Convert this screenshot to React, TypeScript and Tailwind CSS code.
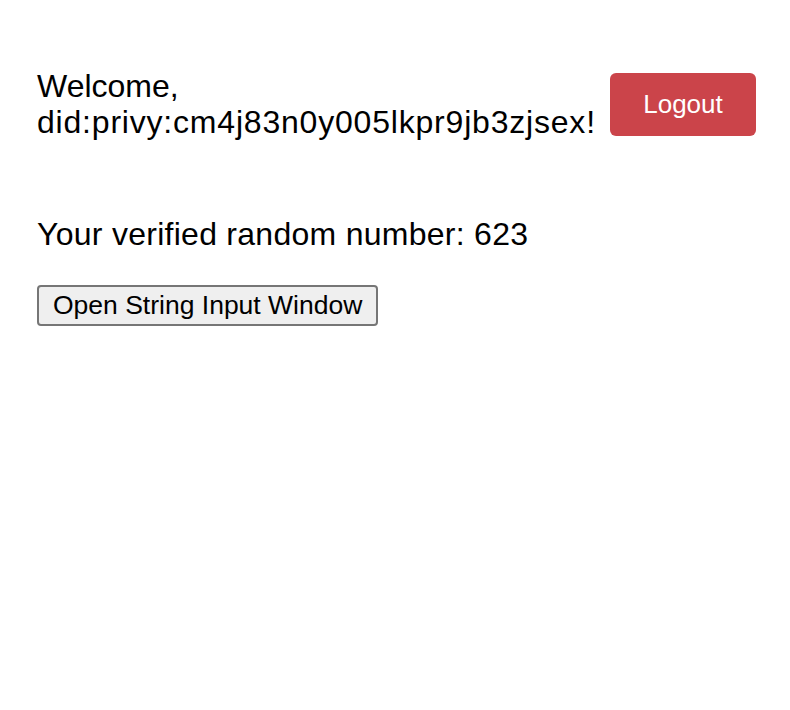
import React from 'react';

const App: React.FC = () => {
  return (
    <div className="min-h-screen bg-white pl-[37px] pr-[34px] pt-[68px] text-black [font-family:'Liberation_Sans',Arial,sans-serif]">
      <div className="flex items-center justify-between">
        <div className="text-[32px] leading-[36px]">
          Welcome,
          <br />
          <span className="tracking-[0.8px]">did:privy:cm4j83n0y005lkpr9jb3zjsex!</span>
        </div>
        <button className="h-[63px] w-[146px] rounded-[6px] bg-[#cb444a] text-[26px] text-white">
          Logout
        </button>
      </div>

      <p className="mt-[76px] text-[32px] leading-[37px] tracking-[0.27px]">
        Your verified random number: 623
      </p>

      <button className="mt-[32px] h-[41px] rounded-[4px] border-2 border-[#767676] bg-[#efefef] px-[14px] text-[26.5px] leading-none">
        Open String Input Window
      </button>
    </div>
  );
};

export default App;
